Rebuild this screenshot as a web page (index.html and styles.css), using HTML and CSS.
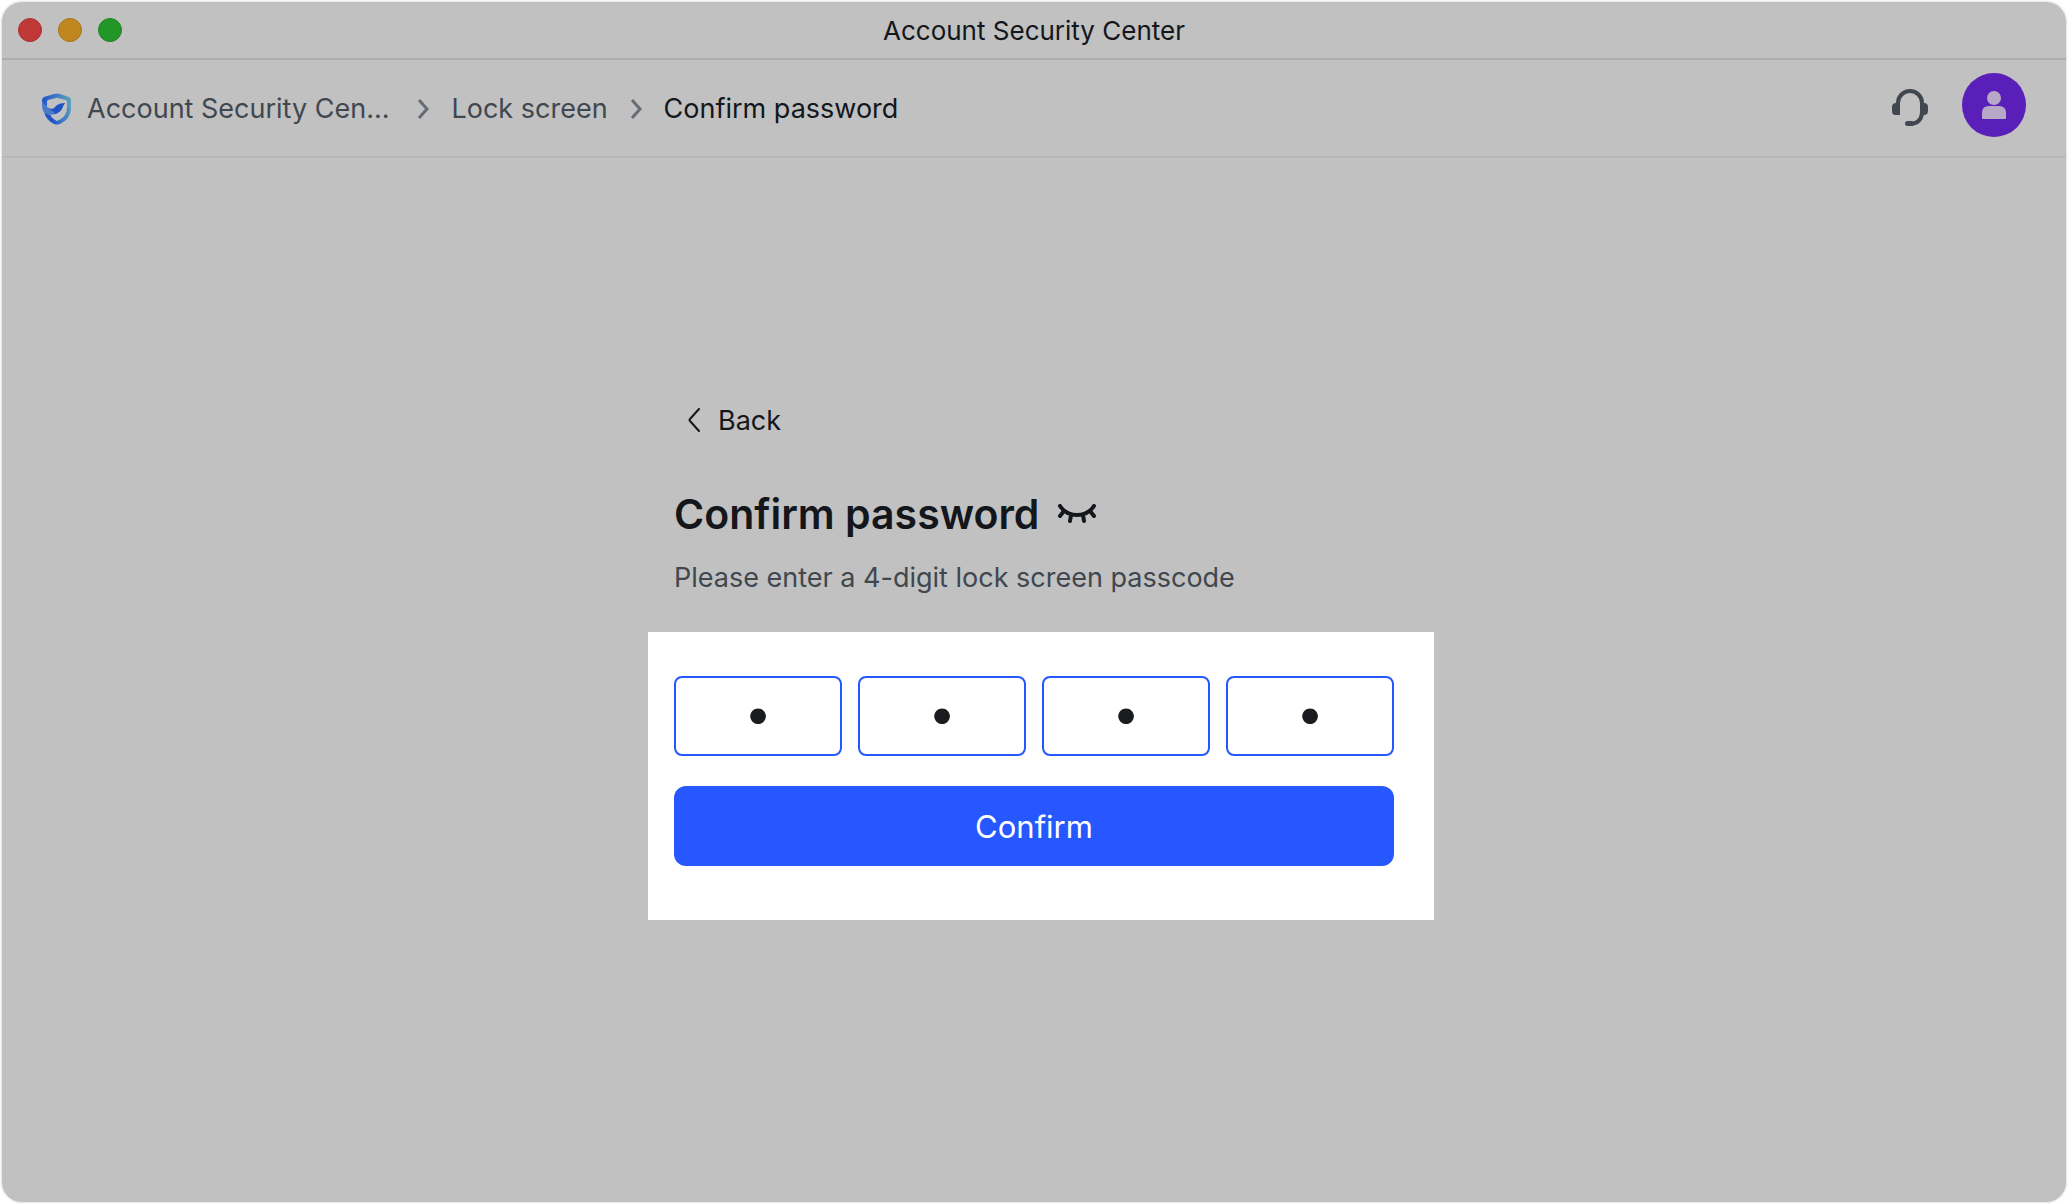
FILE: index.html
```html
<!DOCTYPE html>
<html lang="en">
<head>
<meta charset="utf-8">
<meta name="viewport" content="width=device-width, initial-scale=1">
<title>Account Security Center</title>
<link rel="stylesheet" href="styles.css">
</head>
<body>
<div class="window">
  <div class="titlebar">
    <div class="lights">
      <button class="light light-close" type="button" aria-label="Close"></button>
      <button class="light light-minimize" type="button" aria-label="Minimize"></button>
      <button class="light light-zoom" type="button" aria-label="Zoom"></button>
    </div>
    <div class="window-title">Account Security Center</div>
  </div>
  <header class="header">
    <nav class="crumbs" aria-label="Breadcrumb">
      <a class="crumb crumb-home" href="#">
        <svg class="logo" viewBox="0 0 30 32" aria-hidden="true">
          <defs>
            <linearGradient id="rim" x1="0" y1="0" x2="1" y2="0">
              <stop offset="0" stop-color="#2454c8"/>
              <stop offset="1" stop-color="#5ba3bd"/>
            </linearGradient>
            <linearGradient id="base" x1="0" y1="0" x2="1" y2="0">
              <stop offset="0.3" stop-color="#2052c8"/>
              <stop offset="1" stop-color="#5499c0"/>
            </linearGradient>
          </defs>
          <path d="M0 7Q0 5 2 4L12 1Q15 0 18 1L27 4Q29 5 29 7V16H25V9Q25 8 24 7L16 5Q15 4 14 5L6 7Q5 8 5 9V15L0 13Z" fill="url(#rim)"/>
          <path d="M2 19Q5 22 8 21Q9 25 15 28Q25 24 25 15H29Q29 26 18 31Q15 32 12 31Q4 27 2 19Z" fill="url(#base)"/>
          <path d="M0 8Q4 15 11 16L16 20Q10 23 4 21Q0 18 0 13Z" fill="#4a7bc8"/>
          <path d="M8 17Q12 16 15 12Q18 10 23 10Q21 13 20 16Q17 21 11 21Q15 19 8 17Z" fill="#2052c8"/>
        </svg>
        <span>Account Security Cen...</span>
      </a>
      <svg class="separator" viewBox="0 0 12 20" aria-hidden="true"><path d="M2 1L10 10L2 19"/></svg>
      <a class="crumb" href="#">Lock screen</a>
      <svg class="separator" viewBox="0 0 12 20" aria-hidden="true"><path d="M2 1L10 10L2 19"/></svg>
      <span class="crumb crumb-current" aria-current="page">Confirm password</span>
    </nav>
    <div class="tools">
      <button class="support" type="button" aria-label="Support">
        <svg viewBox="0 0 36 38" aria-hidden="true">
          <path d="M6 15V14A12 12 0 0 1 30 14V22Q30 35 17 35" fill="none" stroke="#40474f" stroke-width="4"/>
          <path d="M8 14V26H3Q0 26 0 22V18Q0 14 4 14ZM28 14H32Q36 14 36 18V22Q36 26 32 26H28Z" fill="#40474f"/>
          <rect x="13" y="32" width="9" height="5" rx="2.5" fill="#40474f"/>
        </svg>
      </button>
      <button class="avatar" type="button" aria-label="Account">
        <svg viewBox="0 0 24 28" aria-hidden="true">
          <circle cx="12" cy="7" r="7"/>
          <path d="M0 27V22Q0 15 7 15H17Q24 15 24 22V27Q24 28 23 28H1Q0 28 0 27Z"/>
        </svg>
      </button>
    </div>
  </header>
  <main class="main">
    <form class="form">
      <button class="back" type="button">
        <svg viewBox="0 0 14 24" aria-hidden="true"><path d="M11 1L2 11Q1 12 2 13L11 23"/></svg>
        Back
      </button>
      <div class="heading">
        <h1>Confirm password</h1>
        <button class="reveal" type="button" aria-label="Show passcode">
          <svg viewBox="0 0 40 20" aria-hidden="true"><path d="M3 2Q9 11 20 11Q31 11 37 2M7 7L3 12M14 11L13 17M26 11L27 17M33 7L37 12"/></svg>
        </button>
      </div>
      <p class="hint">Please enter a 4-digit lock screen passcode</p>
      <div class="panel">
        <div class="digits">
          <input class="digit" type="password" maxlength="1" value="1" aria-label="Digit 1">
          <input class="digit" type="password" maxlength="1" value="2" aria-label="Digit 2">
          <input class="digit" type="password" maxlength="1" value="3" aria-label="Digit 3">
          <input class="digit" type="password" maxlength="1" value="4" aria-label="Digit 4">
        </div>
        <button class="confirm" type="submit">Confirm</button>
      </div>
    </form>
  </main>
</div>
</body>
</html>
```
FILE: styles.css
```css
* {
  box-sizing: border-box;
}

body {
  margin: 0;
  padding: 2px;
  min-height: 100vh;
  display: flex;
  background: #fff;
  color: #13171b;
  font-family: Inter, "Liberation Sans", sans-serif;
  font-size: 27px;
}

button {
  padding: 0;
  border: 0;
  background: none;
  color: inherit;
  font: inherit;
  cursor: pointer;
}

svg {
  display: block;
}

.window {
  flex: 1;
  display: flex;
  flex-direction: column;
  overflow: hidden;
  border-radius: 20px;
  background: #c1c1c1;
  box-shadow: 0 0 2px 1px #e2e2e2;
}

.titlebar {
  display: grid;
  grid-template-columns: 1fr auto 1fr;
  align-items: center;
  height: 58px;
  padding: 0 16px;
  border-bottom: 2px solid #adadad;
}

.lights {
  display: flex;
  gap: 16px;
}

.light {
  width: 24px;
  height: 24px;
  border: 1px solid #ad3030;
  border-radius: 50%;
  background: #c03737;
}

.light-minimize {
  border-color: #aa7519;
  background: #c0861f;
}

.light-zoom {
  border-color: #208422;
  background: #239628;
}

.window-title {
  padding-top: 2px;
  font-size: 26px;
  line-height: 32px;
}

.header {
  display: flex;
  align-items: center;
  justify-content: space-between;
  height: 98px;
  padding: 0 40px;
  border-bottom: 2px solid #b8b8b8;
}

.crumbs {
  display: flex;
  align-items: center;
  gap: 22px;
  padding-top: 2px;
  line-height: 36px;
}

.crumb {
  color: #40474f;
  text-decoration: none;
  white-space: nowrap;
}

.crumb-home {
  display: flex;
  align-items: center;
  gap: 15px;
  padding-right: 6px;
}

.crumb-current {
  color: #13171b;
}

.logo {
  width: 30px;
  height: 32px;
}

.separator {
  width: 12px;
  height: 20px;
  fill: none;
  stroke: #666c74;
  stroke-width: 3;
}

.tools {
  display: flex;
  align-items: center;
  gap: 34px;
  padding-bottom: 6px;
}

.support {
  padding-top: 6px;
}

.support svg {
  width: 36px;
  height: 38px;
}

.avatar {
  display: grid;
  place-items: center;
  width: 64px;
  height: 64px;
  border-radius: 50%;
  background: #5b1fb9;
}

.avatar svg {
  width: 24px;
  height: 28px;
  fill: #b8a8c8;
}

.main {
  flex: 1;
  padding: 242px 40px 40px;
}

.form {
  max-width: 720px;
  margin: 0 auto;
}

.back {
  display: flex;
  align-items: center;
  gap: 16px;
  height: 40px;
  padding-left: 14px;
}

.back svg {
  width: 14px;
  height: 24px;
  fill: none;
  stroke: #13171b;
  stroke-width: 2;
  stroke-linecap: round;
}

.heading {
  display: flex;
  align-items: center;
  gap: 18px;
  margin-top: 48px;
}

.heading h1 {
  margin: 0;
  font-size: 41px;
  font-weight: 600;
  line-height: 52px;
}

.reveal svg {
  width: 40px;
  height: 20px;
  fill: none;
  stroke: #13171b;
  stroke-width: 4;
  stroke-linecap: round;
}

.hint {
  margin: 20px 0 36px;
  color: #40474f;
  line-height: 36px;
}

.panel {
  margin: 0 -40px 0 -26px;
  padding: 44px 40px 54px 26px;
  background: #fff;
}

.digits {
  display: grid;
  grid-template-columns: repeat(4, 1fr);
  gap: 16px;
}

.digit {
  width: 100%;
  height: 80px;
  padding: 0 0 6px;
  border: 2px solid #2757ff;
  border-radius: 8px;
  background: #fff;
  color: #1a1b1f;
  font: 50px Inter, sans-serif;
  text-align: center;
}

.confirm {
  width: 100%;
  height: 80px;
  margin-top: 30px;
  border-radius: 12px;
  background: #2757ff;
  color: #fff;
  font-size: 31px;
}
```
